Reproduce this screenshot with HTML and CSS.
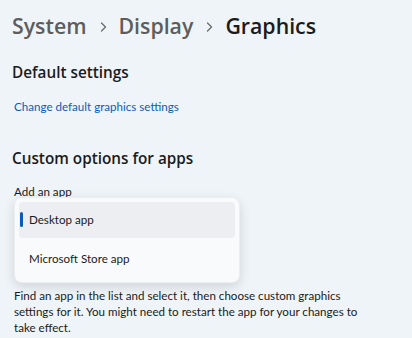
FILE: index.html
```html
<!DOCTYPE html>
<html lang="en">
<head>
    <meta charset="UTF-8">
    <meta name="viewport" content="width=device-width, initial-scale=1.0">
    <title>Graphics</title>
    <link rel="stylesheet" href="styles.css">
</head>
<body>

<div class="page">
    <nav class="breadcrumb">
        <span class="crumb">System</span>
        <svg class="chevron" width="7" height="10" viewBox="0 0 7 10"><path d="M1.5 1 L5.5 5 L1.5 9" fill="none" stroke="currentColor" stroke-width="1.3" stroke-linecap="round" stroke-linejoin="round"/></svg>
        <span class="crumb">Display</span>
        <svg class="chevron" width="7" height="10" viewBox="0 0 7 10"><path d="M1.5 1 L5.5 5 L1.5 9" fill="none" stroke="currentColor" stroke-width="1.3" stroke-linecap="round" stroke-linejoin="round"/></svg>
        <span class="crumb current">Graphics</span>
    </nav>

    <h2 class="section-title">Default settings</h2>
    <a href="#" class="link">Change default graphics settings</a>

    <h2 class="section-title custom">Custom options for apps</h2>
    <label class="field-label">Add an app</label>
    <div class="field">
        <div class="combobox"></div>
        <ul class="flyout">
            <li class="flyout-item selected">Desktop app</li>
            <li class="flyout-item">Microsoft Store app</li>
        </ul>
    </div>
    <p class="hint">Find an app in the list and select it, then choose custom graphics settings for it. You might need to restart the app for your changes to take effect.</p>
</div>

</body>
</html>
```

FILE: styles.css
```css
body {
    margin: 0;
    background-color: #eff4f9;
    font-family: "Open Sans", "Noto Sans", sans-serif;
    color: #1b1b1b;
}
.page {
    padding: 11px 12px 0;
}
.breadcrumb {
    display: flex;
    align-items: center;
    height: 30px;
    font-size: 21.3px;
    font-weight: 600;
    color: #5d5d5d;
}
.crumb {
    line-height: 30px;
}
.crumb.current {
    color: #1b1b1b;
}
.chevron {
    margin: 2px 12px 0 13px;
    color: #6a6a6a;
}
.section-title {
    margin: 20px 0 0;
    font-size: 15.3px;
    font-weight: 600;
    line-height: 22px;
}
.section-title.custom {
    margin-top: 32px;
}
.link,
.field-label,
.flyout-item,
.hint {
    font-family: Lato, "Open Sans", sans-serif;
    font-size: 11.6px;
}
.link {
    display: block;
    margin: 16px 0 0 2px;
    line-height: 16px;
    color: #0a5db5;
    text-decoration: none;
}
.field-label {
    display: block;
    margin: 15px 0 0 2px;
    line-height: 16px;
}
.field {
    position: relative;
    padding-top: 6px;
}
.combobox {
    width: 226px;
    height: 82px;
}
.flyout {
    position: absolute;
    top: -3px;
    left: 2px;
    width: 226px;
    margin: 0;
    padding: 4px 4px 5px;
    box-sizing: border-box;
    list-style: none;
    background-color: #f9fafb;
    border: 1px solid rgba(0, 0, 0, 0.05);
    border-radius: 8px;
    box-shadow: 0 4px 12px rgba(0, 0, 0, 0.13);
}
.flyout-item {
    position: relative;
    height: 36px;
    padding-left: 10px;
    border-radius: 4px;
    line-height: 36px;
}
.flyout-item + .flyout-item {
    margin-top: 3px;
}
.flyout-item.selected {
    background-color: #eceef1;
}
.flyout-item.selected::before {
    content: "";
    position: absolute;
    left: 1px;
    top: 10px;
    width: 3px;
    height: 15px;
    border-radius: 2px;
    background-color: #0a5db5;
}
.hint {
    margin: 0 0 0 2px;
    max-width: 348px;
    line-height: 16px;
}
```
